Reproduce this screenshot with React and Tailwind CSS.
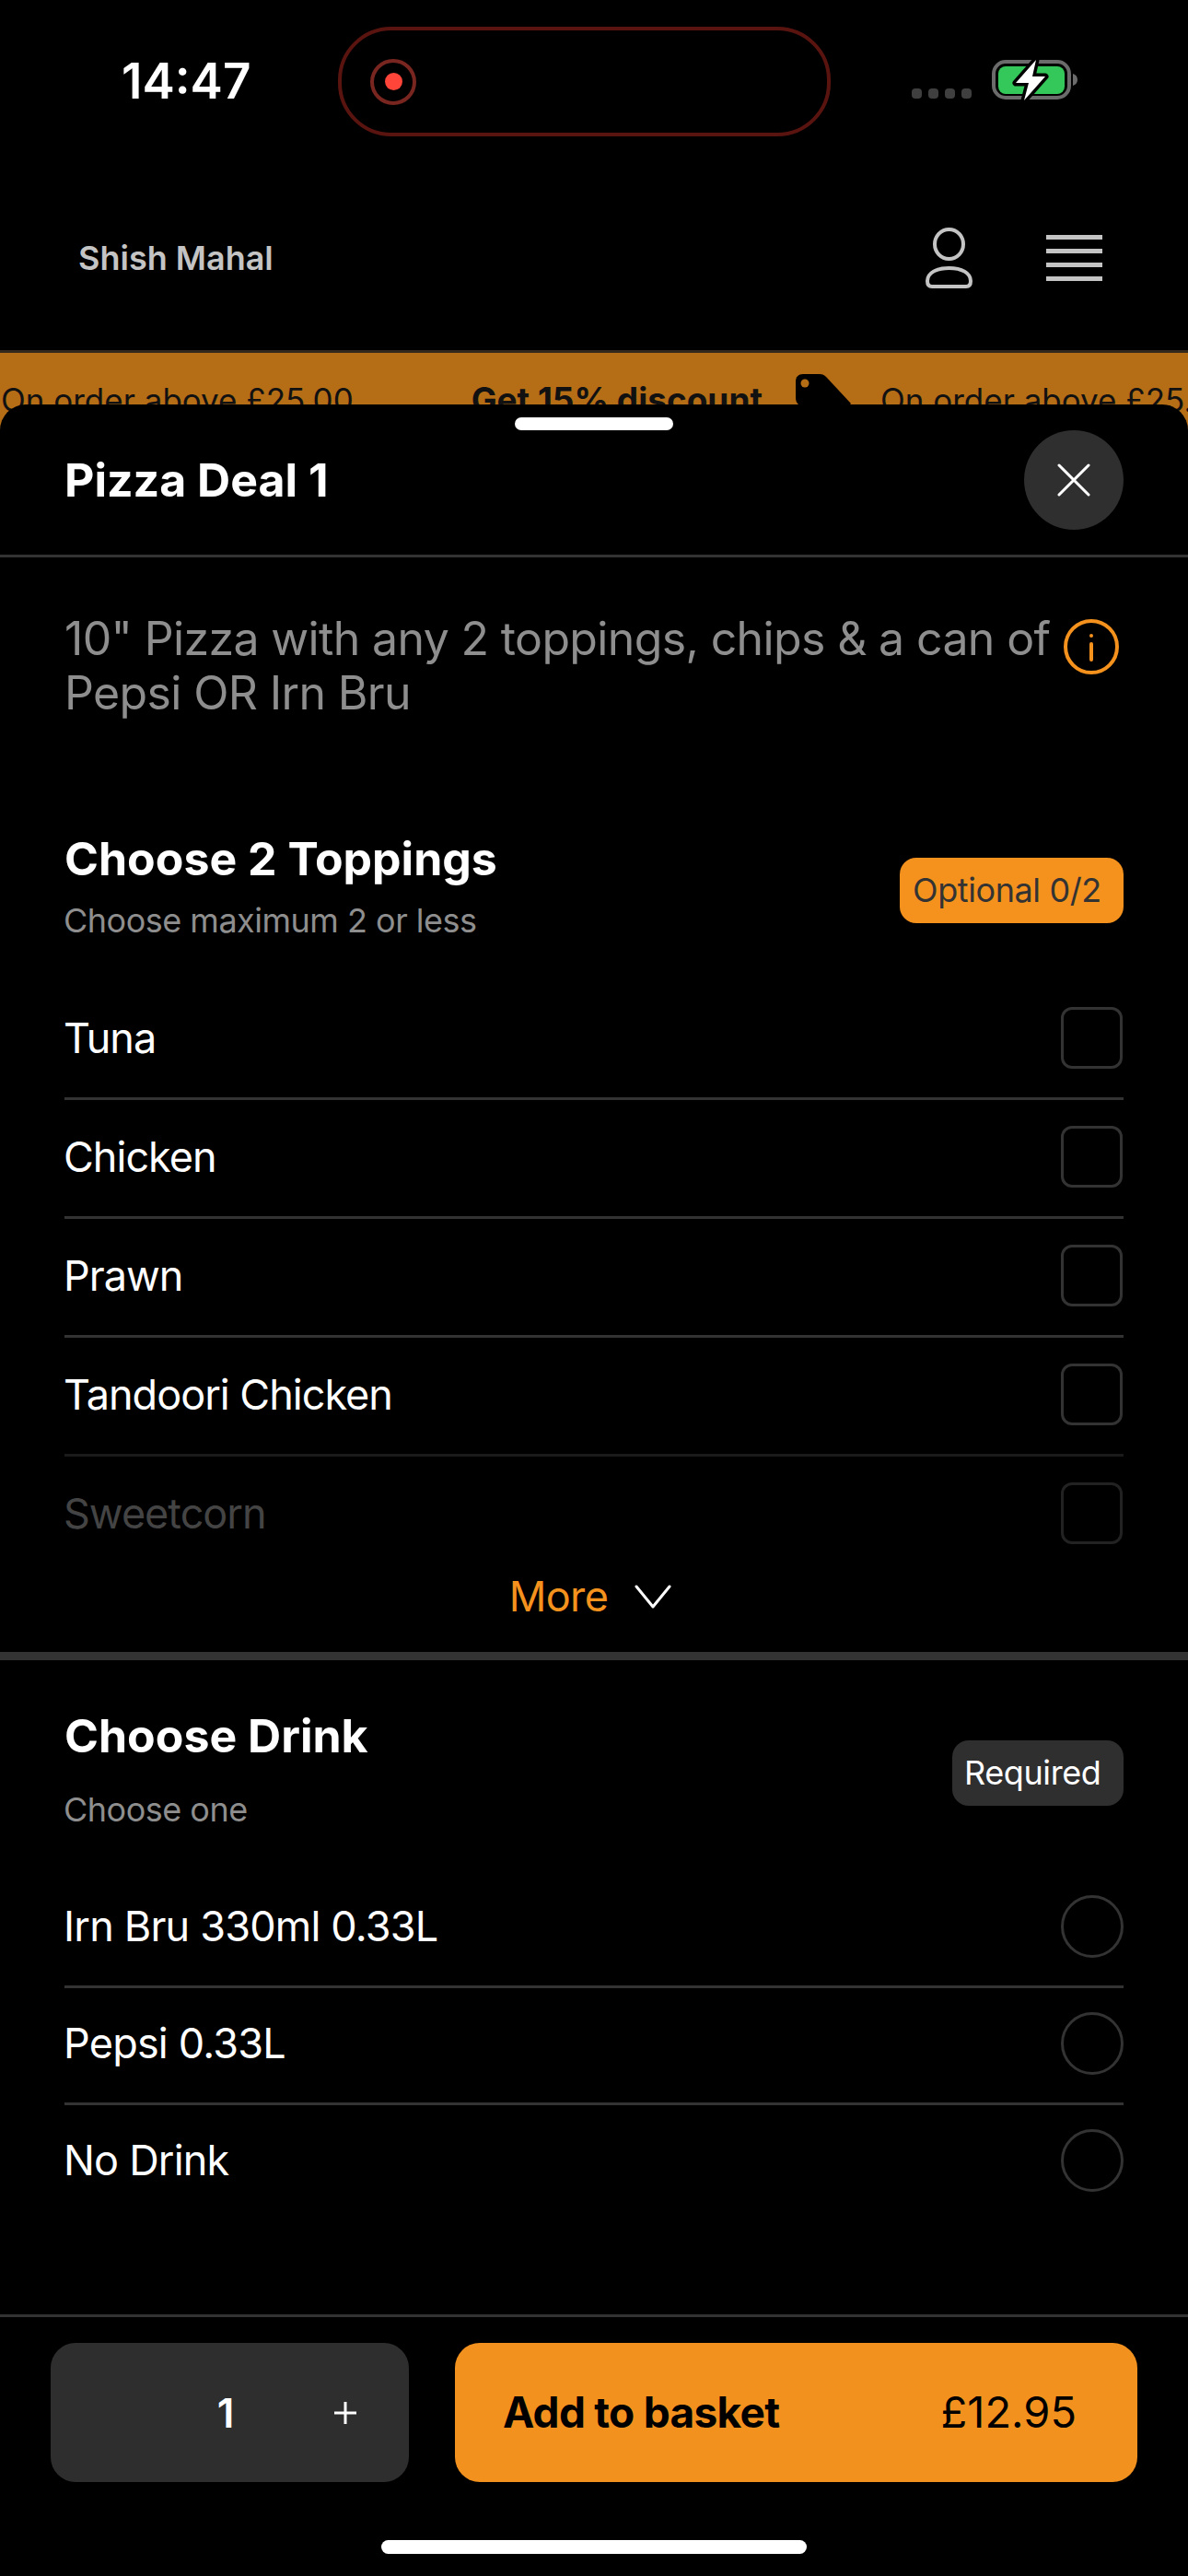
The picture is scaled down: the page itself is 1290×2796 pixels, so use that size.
import React from "react";

const toppings = ["Tuna", "Chicken", "Prawn"];
const drinks = ["Irn Bru 330ml 0.33L", "Pepsi 0.33L"];

const StatusBar = () => (
  <div className="flex items-start pt-[29px] pl-[132px]">
    <div className="w-[235px] mt-[27px] text-[53px] leading-[64px] font-semibold text-white">14:47</div>
    {/* recording island */}
    <div className="w-[535px] h-[119px] rounded-[58px] border-4 border-[#5a1410] flex items-center pl-[31px]">
      <div className="w-[50px] h-[50px] rounded-full border-4 border-[#7a2620] flex items-center justify-center">
        <div className="w-[19px] h-[19px] rounded-full bg-[#ff453a]" />
      </div>
    </div>
    <div className="flex gap-[7px] ml-[88px] mt-[67px]">
      <div className="w-[11px] h-[11px] rounded-[4px] bg-[#3f3f3f]" />
      <div className="w-[11px] h-[11px] rounded-[4px] bg-[#3f3f3f]" />
      <div className="w-[11px] h-[11px] rounded-[4px] bg-[#3f3f3f]" />
      <div className="w-[11px] h-[11px] rounded-[4px] bg-[#3f3f3f]" />
    </div>
    <svg width="93" height="44" viewBox="0 0 93 44" className="ml-[22px] mt-[36px] overflow-visible">
      <rect x="2" y="2" width="82" height="39" rx="13" fill="none" stroke="#6b6b6b" strokeWidth="4" />
      <rect x="7" y="7" width="72" height="30" rx="8" fill="#34c759" />
      <path d="M88 15 C91 16 93 18 93 21.5 C93 25 91 27 88 28 Z" fill="#6b6b6b" />
      <path d="M48 0 L26 25 H40 L35 44 L58 18 H44 Z" fill="#fff" stroke="#000" strokeWidth="7" strokeLinejoin="round" paintOrder="stroke" />
    </svg>
  </div>
);

const Header = () => (
  <div className="flex items-center h-[66px] mt-[99px] mb-[67px] pl-[85px]">
    <div className="text-[36px] leading-[44px] font-semibold text-[#c4c4c4]">Shish Mahal</div>
    <svg width="51" height="66" viewBox="0 0 51 66" fill="none" stroke="#c4c4c4" strokeWidth="4" className="ml-auto">
      <ellipse cx="25.5" cy="18" rx="15.5" ry="16" />
      <path d="M2 58 C2 49 12 44 25.5 44 C39 44 49 49 49 58 C49 62 47 64 44 64 H7 C4 64 2 62 2 58 Z" />
    </svg>
    <div className="flex flex-col gap-[10px] w-[61px] ml-[80px] mr-[93px]">
      <div className="h-[5px] bg-[#c4c4c4]" />
      <div className="h-[5px] bg-[#c4c4c4]" />
      <div className="h-[5px] bg-[#c4c4c4]" />
      <div className="h-[5px] bg-[#c4c4c4]" />
    </div>
  </div>
);

const Banner = () => (
  <div className="h-[90px] border-t-[3px] border-[#35281c] bg-[#b56d16] overflow-hidden flex items-start pt-[23px] pl-[1px] whitespace-nowrap text-[35px] leading-[40px] text-[#111]">
    <span className="mt-[8px]">On order above £25.00</span>
    <span className="mt-[8px] ml-[128px] text-[37px] font-bold">Get 15% discount</span>
    <svg width="60" height="60" viewBox="0 0 60 60" className="ml-[36px] shrink-0">
      <path d="M8 0 H26 C29 0 31 1 33 3 L60 32 L32 60 L3 33 C1 31 0 29 0 26 V8 C0 3 3 0 8 0 Z" fill="#000" />
      <circle cx="10" cy="10" r="4.5" fill="#b56d16" />
    </svg>
    <span className="mt-[8px] ml-[32px]">On order above £25.00</span>
  </div>
);

const SectionHead = ({ title, sub, subGap, badge, badgeClass }) => (
  <div className="flex items-start justify-between px-[70px]">
    <div>
      <div className="text-[50px] leading-[60px] font-bold text-white">{title}</div>
      <div className={`text-[36px] leading-[44px] tracking-[-0.5px] -ml-[1px] text-[#8e8e8e] ${subGap}`}>{sub}</div>
    </div>
    <div className={`h-[71px] rounded-[18px] flex items-center pb-[2px] text-[36px] tracking-[-0.4px] ${badgeClass}`}>{badge}</div>
  </div>
);

const ToppingRow = ({ name, border, text, box }) => (
  <div className={`h-[129px] flex items-center justify-between pb-[3px] border-b-[3px] ${border}`}>
    <span className={`text-[45px] tracking-[-1px] -ml-[1px] ${text}`}>{name}</span>
    <div className={`w-[67px] h-[67px] rounded-[12px] border-[3px] mr-[1px] ${box}`} />
  </div>
);

const DrinkRow = ({ name, last }) => (
  <div className={`h-[127px] flex items-center justify-between pb-[4px] border-b-[3px] ${last ? "border-transparent" : "border-[#333]"}`}>
    <span className="text-[45px] tracking-[-0.8px] -ml-[1px] text-white">{name}</span>
    <div className="w-[68px] h-[68px] rounded-full border-[3px] border-[#333]" />
  </div>
);

const Sheet = () => (
  <div className="relative z-10 -mt-[31px] flex-1 flex flex-col bg-black rounded-t-[28px]">
    <div className="w-[172px] h-[14px] mt-[14px] mx-auto rounded-full bg-white" />

    <div className="flex items-center justify-between h-[108px] px-[70px] mb-[27px]">
      <div className="text-[50px] font-bold text-white">Pizza Deal 1</div>
      <div className="w-[108px] h-[108px] rounded-full bg-[#2f2f2f] flex items-center justify-center">
        <svg width="36" height="36" viewBox="0 0 36 36" stroke="#fff" strokeWidth="3" strokeLinecap="round">
          <path d="M2 2 L34 34 M34 2 L2 34" />
        </svg>
      </div>
    </div>
    <div className="h-[3px] bg-[#333]" />

    <div className="flex items-start justify-between pl-[70px] pr-[75px] pt-[59px]">
      <div className="w-[1075px] text-[50px] leading-[59px] tracking-[-0.64px] text-[#8e8e8e]">
        10" Pizza with any 2 toppings, chips &amp; a can of Pepsi OR Irn Bru
      </div>
      <svg width="60" height="60" viewBox="0 0 60 60" fill="none" stroke="#f5921e" strokeWidth="4" className="mt-[8px]">
        <circle cx="30" cy="30" r="28" />
        <path d="M30 27 V44" strokeLinecap="round" />
        <circle cx="30" cy="18" r="2" fill="#f5921e" stroke="none" />
      </svg>
    </div>

    <div className="mt-[120px]">
      <SectionHead
        title="Choose 2 Toppings"
        sub="Choose maximum 2 or less"
        subGap="mt-[15px] mb-[1px]"
        badge="Optional 0/2"
        badgeClass="w-[243px] pl-[14px] mt-[29px] bg-[#f5921e] text-[#333]"
      />
    </div>
    <div className="px-[70px] mt-[43px]">
      {toppings.map((name, i) => (
        <ToppingRow key={i} name={name} border="border-[#333]" text="text-white" box="border-[#333]" />
      ))}
      <ToppingRow name="Tandoori Chicken" border="border-[#1a1a1a]" text="text-white" box="border-[#333]" />
      <ToppingRow name="Sweetcorn" border="border-transparent" text="text-[#444]" box="border-[#222]" />
    </div>
    <div className="flex items-center justify-center h-[50px] -mt-[2px] mb-[35px] pr-[8px]">
      <span className="text-[45px] tracking-[-0.6px] text-[#f5921e]">More</span>
      <svg width="40" height="26" viewBox="0 0 40 26" fill="none" stroke="#fff" strokeWidth="3" strokeLinecap="round" strokeLinejoin="round" className="ml-[29px]">
        <path d="M2 2 L20 24 L38 2" />
      </svg>
    </div>
    <div className="h-[9px] bg-[#333]" />

    <div className="mt-[52px]">
      <SectionHead
        title="Choose Drink"
        sub="Choose one"
        subGap="mt-[28px]"
        badge="Required"
        badgeClass="w-[186px] pl-[13px] mt-[35px] bg-[#2f2f2f] text-white"
      />
    </div>
    <div className="px-[70px] mt-[45px]">
      {drinks.map((name, i) => (
        <DrinkRow key={i} name={name} />
      ))}
      <DrinkRow name="No Drink" last />
    </div>

    <div className="mt-auto border-t-[3px] border-[#333] pt-[28px] px-[55px] flex gap-[50px]">
      <div className="w-[389px] h-[151px] rounded-[27px] bg-[#2e2e2e] flex items-center text-white">
        <span className="ml-[180px] w-[20px] text-center text-[44px] font-semibold">1</span>
        <svg width="26" height="26" viewBox="0 0 26 26" stroke="#fff" strokeWidth="3" className="ml-[107px]">
          <path d="M13 1 V25 M1 13 H25" />
        </svg>
      </div>
      <div className="w-[741px] h-[151px] rounded-[27px] bg-[#f3911f] flex items-center justify-between pl-[52px] pr-[66px] text-black text-[46px]">
        <span className="font-bold tracking-[-0.7px]">Add to basket</span>
        <span className="text-[47px]">£12.95</span>
      </div>
    </div>
    <div className="w-[462px] h-[15px] mt-[63px] mb-[24px] mx-auto rounded-full bg-white" />
  </div>
);

export default function App() {
  return (
    <div className="w-[1290px] h-[2796px] flex flex-col bg-black font-[Inter,sans-serif] overflow-hidden">
      <StatusBar />
      <Header />
      <Banner />
      <Sheet />
    </div>
  );
}
